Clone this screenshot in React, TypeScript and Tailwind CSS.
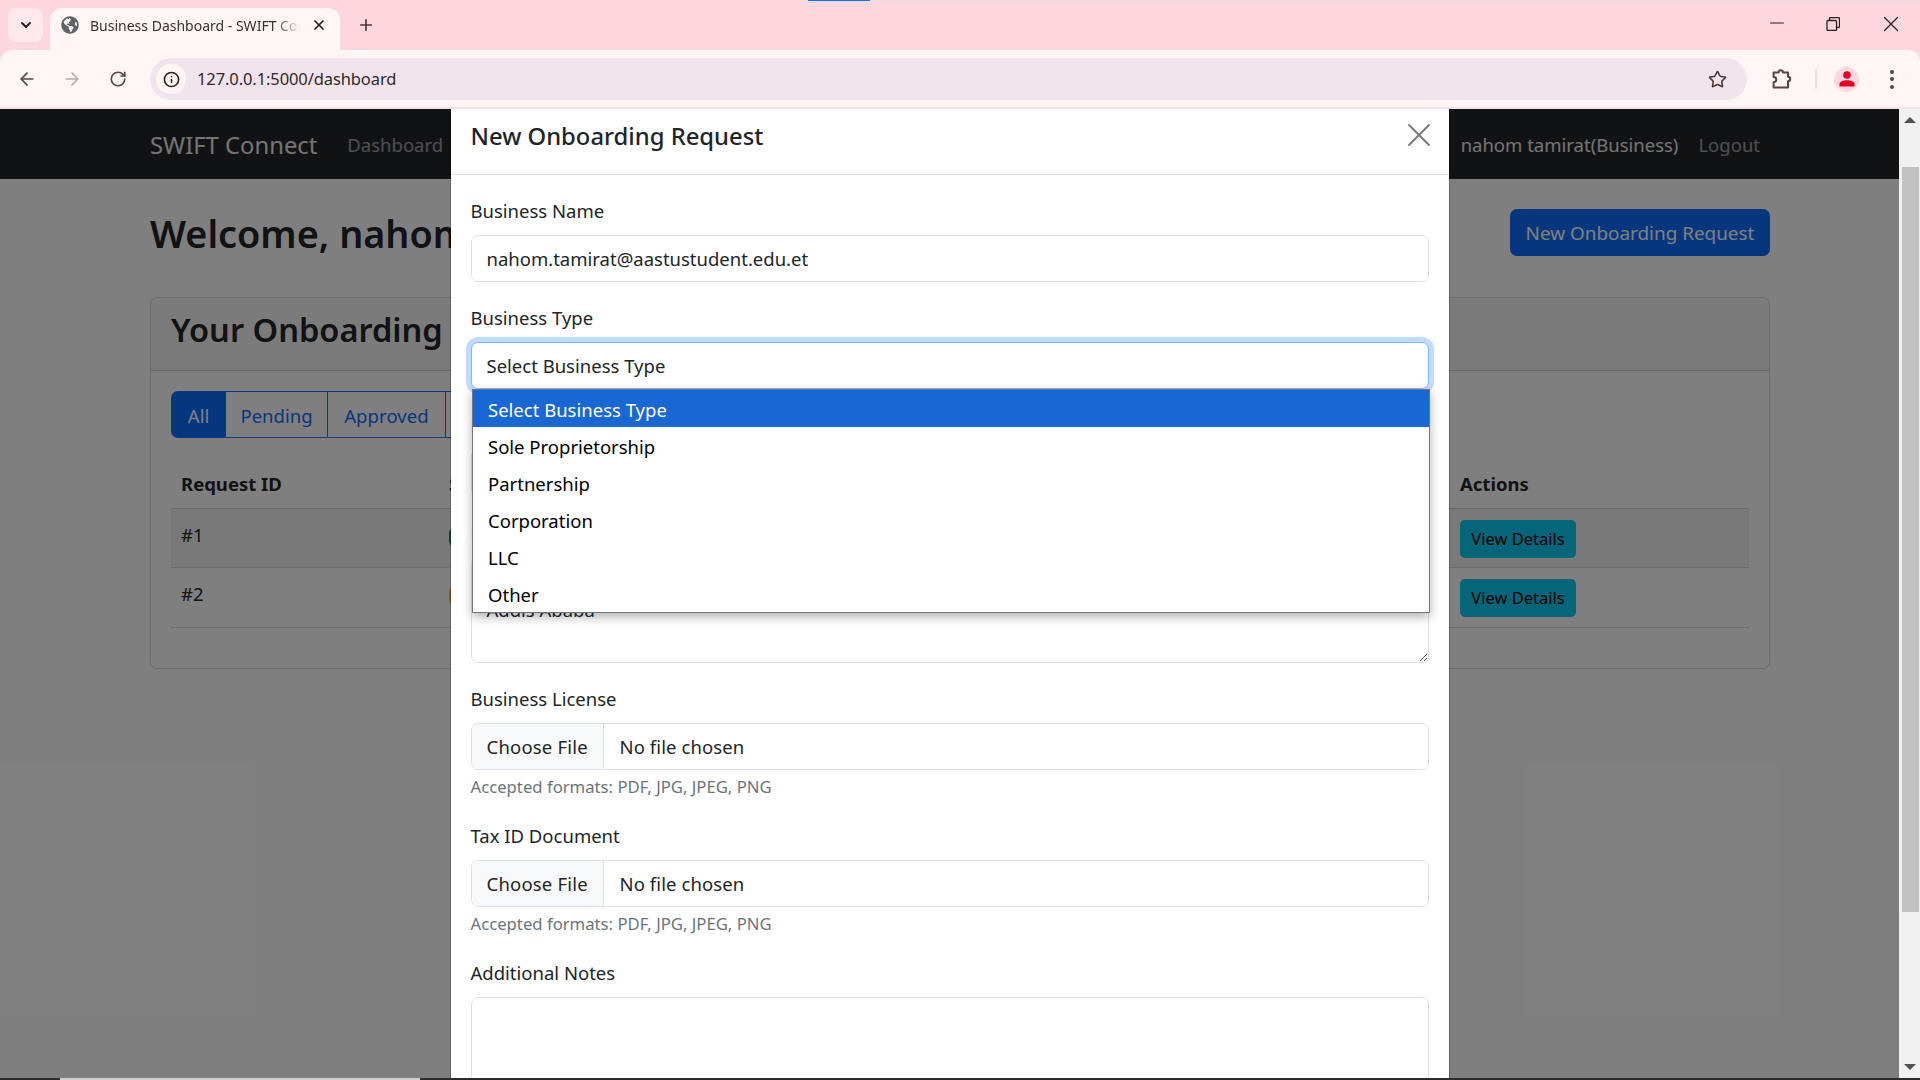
import { ArrowLeft, ArrowRight, ChevronDown, Info, Minus, Plus, RotateCw, Star, X } from "lucide-react";
import { FaGlobeAmericas } from "react-icons/fa";

const businessTypes = ["Select Business Type", "Sole Proprietorship", "Partnership", "Corporation", "LLC", "Other"];
const fieldClass = "h-[47px] w-full rounded-[7px] border border-[#dee2e6] bg-white px-[15px] text-[#212529] outline-none";
const labelClass = "mb-[9px] block pt-px";

function BrowserChrome() {
  return (
    <header className="shrink-0 bg-[#ffd7df]">
      <div className="relative h-[50px]">
        <div className="absolute left-[808px] top-0 h-px w-[62px] bg-[#0b76e8]" />
        <div className="absolute left-[870px] top-0 h-px w-[1050px] bg-[#e4dfe0]" />
        <div className="flex h-full items-end pl-2">
          <div className="mb-2 flex h-[34px] w-[35px] items-center justify-center rounded-lg bg-[#ffe9ec]">
            <ChevronDown size={16} strokeWidth={3} className="text-[#2b1f21]" />
          </div>
          <div className="ml-[7px] flex h-[42px] w-[290px] items-center rounded-t-xl bg-[#fff6f5] pb-2 pl-[11px]">
            <FaGlobeAmericas size={18} className="shrink-0 text-[#5f6368]" />
            <span className="ml-[11px] w-[210px] overflow-hidden whitespace-nowrap text-[14px] text-[#3b2f30] [mask-image:linear-gradient(to_right,black_88%,transparent)]">
              Business Dashboard - SWIFT Connect
            </span>
            <X size={16} strokeWidth={2.6} className="ml-[11px] text-[#2b1f21]" />
          </div>
          <Plus size={18} strokeWidth={2.2} className="mb-[16px] ml-[17px] text-[#4a3638]" />
        </div>
        <div className="absolute right-0 top-0 h-full text-[#2b1f21]">
          <Minus size={22} strokeWidth={1.3} className="absolute right-[132px] top-[12px]" />
          <svg viewBox="0 0 14 14" className="absolute right-[80px] top-[17px] h-[14px] w-[14px]" fill="none" stroke="currentColor" strokeWidth="1.3">
            <rect x="1" y="3.500" width="9.500" height="10" rx="1" />
            <path d="M3.500 3.500V1.500a1 1 0 0 1 1-1h7.500a1.500 1.500 0 0 1 1.500 1.500v7.500a1 1 0 0 1-1 1h-2" />
          </svg>
          <X size={26} strokeWidth={1.2} className="absolute right-[16px] top-[11px]" />
        </div>
      </div>
      <div className="flex h-[57px] items-center rounded-t-xl bg-[#fff6f5] pt-px text-[#5b4245]">
        <ArrowLeft size={20} strokeWidth={2} className="ml-[17px]" />
        <ArrowRight size={20} strokeWidth={2} className="ml-[25px] text-[#b8a9ab]" />
        <RotateCw size={18} strokeWidth={2.2} className="ml-[27px]" />
        <div className="ml-[23px] flex h-[42px] w-[1597px] items-center rounded-full bg-[#f1e4ec] pl-[6px]">
          <div className="flex h-[30px] w-[30px] items-center justify-center rounded-full bg-[#fff6f5]">
            <Info size={17} strokeWidth={2.2} className="text-[#2b1f21]" />
          </div>
          <span className="ml-[11px] text-[16.500px] tracking-[-0.1px] text-[#33282a]">127.0.0.1:5000/dashboard</span>
          <Star size={19} strokeWidth={2} className="ml-auto mr-[20px] text-[#4a3638]" />
        </div>
        <svg viewBox="0 0 20 20" className="ml-[23px] h-[24px] w-[24px]" fill="none" stroke="currentColor" strokeWidth="1.7" strokeLinejoin="round">
          <path d="M3 4.500H7.200a1.800 1.800 0 0 1 3.600 0H15V8.200a1.800 1.800 0 0 1 0 3.600V17H3v-4.200a2.200 2.200 0 0 0 0-4.400z" />
        </svg>
        <div className="ml-[21px] h-[20px] w-[2px] bg-[#ffd7df]" />
        <div className="ml-[17px] flex h-[25px] w-[25px] items-center justify-center rounded-full bg-[#ffd7df]">
          <svg viewBox="0 0 20 20" className="h-[20px] w-[20px]" fill="#e00029">
            <circle cx="10" cy="6" r="3.800" />
            <path d="M2.500 17.500v-2.200c0-2.500 3.500-4 7.500-4s7.500 1.500 7.500 4v2.200z" />
          </svg>
        </div>
        <div className="ml-[31px] flex flex-col gap-[3.500px]">
          <span className="h-[4px] w-[4px] rounded-full bg-[#5b4245]" />
          <span className="h-[4px] w-[4px] rounded-full bg-[#5b4245]" />
          <span className="h-[4px] w-[4px] rounded-full bg-[#5b4245]" />
        </div>
      </div>
      <div className="h-[2px] bg-[#f8e0e4]" />
    </header>
  );
}

function Dashboard() {
  return (
    <div className="text-[18.500px] leading-[30px] text-[#212529]">
      <nav className="flex h-[70px] items-center bg-[#212529] pl-[150px] pr-[139px] pt-px">
        <span className="text-[23.800px] text-white/90">SWIFT Connect</span>
        <span className="ml-[30px] text-white/55">Dashboard</span>
        <span className="ml-auto text-white/90">nahom tamirat(Business)</span>
        <span className="ml-5 text-white/55">Logout</span>
      </nav>
      <main className="pl-[150px] pr-[129px] pt-[30px]">
        <div className="flex items-center justify-between">
          <h1 className="pt-[3px] text-[37.800px] font-semibold leading-[44px]">Welcome, nahom tamirat</h1>
          <button className="h-[47px] w-[260px] rounded-[7px] bg-[#0d6efd] text-[18.900px] text-white">New Onboarding Request</button>
        </div>
        <section className="mt-[41px] h-[372px] rounded-[7px] border border-black/15">
          <div className="flex h-[73px] items-center border-b border-black/15 bg-black/[0.03] px-5 pb-2">
            <h3 className="text-[32.600px] font-semibold">Your Onboarding Requests</h3>
          </div>
          <div className="px-5 pt-5">
            <div className="flex h-[47px] text-[#0d6efd]">
              <span className="flex w-[55px] items-center justify-center rounded-l-[7px] bg-[#0d6efd] pt-[2px] text-white">All</span>
              <span className="flex w-[102px] items-center justify-center border-y border-r border-[#0d6efd] pt-[2px]">Pending</span>
              <span className="flex w-[118px] items-center justify-center border-y border-r border-[#0d6efd] pt-[2px] tracking-[0.1px]">Approved</span>
              <span className="flex w-[110px] items-center justify-center rounded-r-[7px] border-y border-r border-[#0d6efd] pt-[2px]">Rejected</span>
            </div>
            <table className="mt-[22px] w-full table-fixed text-left">
              <thead>
                <tr className="h-[48px] border-b border-black/15 font-bold">
                  <th className="pl-[10px] font-bold">Request ID</th>
                  <th className="w-[1011px] pl-[10px] font-bold">Status</th>
                  <th className="w-[299px] pl-[10px] font-bold">Actions</th>
                </tr>
              </thead>
              <tbody>
                <tr className="h-[59px] border-b border-black/15 bg-black/5">
                  <td className="pl-[10px] pt-[11px] align-top">#1</td>
                  <td className="pl-[10px] align-top">
                    <span className="mt-[18px] inline-block h-5 w-[90px] rounded-md bg-[#198754]" />
                  </td>
                  <td className="pl-[10px] pt-[11px] align-top">
                    <button className="h-[38px] w-[116px] rounded-[5px] bg-[#0dcaf0] text-[16.500px] text-black">View Details</button>
                  </td>
                </tr>
                <tr className="h-[60px] border-b border-black/15">
                  <td className="pl-[10px] pt-[11px] align-top">#2</td>
                  <td className="pl-[10px] align-top">
                    <span className="mt-[18px] inline-block h-5 w-[90px] rounded-md bg-[#ffc107]" />
                  </td>
                  <td className="pl-[10px] pt-[11px] align-top">
                    <button className="h-[38px] w-[116px] rounded-[5px] bg-[#0dcaf0] text-[16.500px] text-black">View Details</button>
                  </td>
                </tr>
              </tbody>
            </table>
          </div>
        </section>
      </main>
    </div>
  );
}

function FileField({ label }: { label: string }) {
  return (
    <div className="mb-5">
      <label className={labelClass}>{label}</label>
      <div className="flex h-[47px] items-center overflow-hidden rounded-[7px] border border-[#dee2e6]">
        <span className="flex h-full w-[132px] items-center border-r border-[#dee2e6] bg-[#f8f9fa] pl-[15px] tracking-[0.2px]">Choose File</span>
        <span className="ml-[16px] tracking-[0.1px]">No file chosen</span>
      </div>
      <p className="mt-[4px] pb-px text-[16.700px] leading-[25px] text-[#6c757d]">Accepted formats: PDF, JPG, JPEG, PNG</p>
    </div>
  );
}

function OnboardingModal() {
  return (
    <div className="absolute inset-0 bg-black/50">
      <div className="mx-auto h-full w-[1000px] border-x border-black/20 bg-white bg-clip-padding text-[18.500px] leading-[30px] text-[#212529]">
        <div className="flex h-[66px] items-start justify-between border-b border-[#dee2e6] px-5">
          <h5 className="mt-[12px] text-[23.800px] font-medium">New Onboarding Request</h5>
          <X size={40} strokeWidth={1.2} className="mr-[-10px] mt-[6px] text-[#7a7a7a]" />
        </div>
        <form className="px-5 pt-5">
          <div className="mb-5">
            <label className={labelClass}>Business Name</label>
            <input readOnly defaultValue="nahom.tamirat@aastustudent.edu.et" className={fieldClass} />
          </div>
          <div className="relative mb-5">
            <label className={labelClass}>Business Type</label>
            <div className="flex h-[47px] items-center rounded-[7px] border border-[#86b7fe] bg-white px-[15px] shadow-[0_0_0_5px_rgba(13,110,253,0.25)]">
              Select Business Type
            </div>
            <ul className="absolute left-px right-[-1px] top-[87px] z-10 border border-[#767676] bg-white text-black shadow-[0_4px_10px_rgba(0,0,0,0.3)]">
              {businessTypes.map((type, i) => (
                <li key={type} className={"flex h-[37px] items-center pl-[15.500px] pt-[2px]" + (i === 0 ? " bg-[#1967d2] text-white" : "")}>
                  {type}
                </li>
              ))}
            </ul>
          </div>
          <div className="mb-5">
            <label className={labelClass}>Registration Number</label>
            <input readOnly className={fieldClass} />
          </div>
          <div className="mb-5">
            <label className={labelClass}>Business Address</label>
            <textarea readOnly defaultValue={"\nAddis Ababa"} className="block h-[107px] w-full rounded-[7px] border border-[#dee2e6] px-[15px] pt-[8px] outline-none" />
          </div>
          <FileField label="Business License" />
          <FileField label="Tax ID Document" />
          <div>
            <label className={labelClass}>Additional Notes</label>
            <textarea readOnly className="block h-[107px] w-full resize-none rounded-[7px] border border-[#dee2e6] outline-none" />
          </div>
        </form>
      </div>
    </div>
  );
}

function Scrollbar() {
  return (
    <div className="flex w-[21px] shrink-0 flex-col items-center bg-[#f1f1f1] pl-px">
      <span className="mt-[8px] h-0 w-0 border-x-[6px] border-b-[6px] border-x-transparent border-b-[#505050]" />
      <div className="mt-[44px] h-[745px] w-[17px] bg-[#c1c1c1]" />
      <span className="mb-[8px] mt-auto h-0 w-0 border-x-[6px] border-t-[6px] border-x-transparent border-t-[#505050]" />
    </div>
  );
}

export default function App() {
  return (
    <div className="flex h-[1080px] w-[1920px] flex-col overflow-hidden bg-white font-['Noto_Sans','Open_Sans',sans-serif]">
      <BrowserChrome />
      <div className="flex min-h-0 flex-1">
        <div className="relative min-w-0 flex-1 overflow-hidden">
          <Dashboard />
          <OnboardingModal />
        </div>
        <Scrollbar />
      </div>
      <div className="flex h-[2px] shrink-0 bg-[#2c2c2c]">
        <div className="ml-[60px] w-[360px] bg-[#d0d0d0]" />
      </div>
    </div>
  );
}
